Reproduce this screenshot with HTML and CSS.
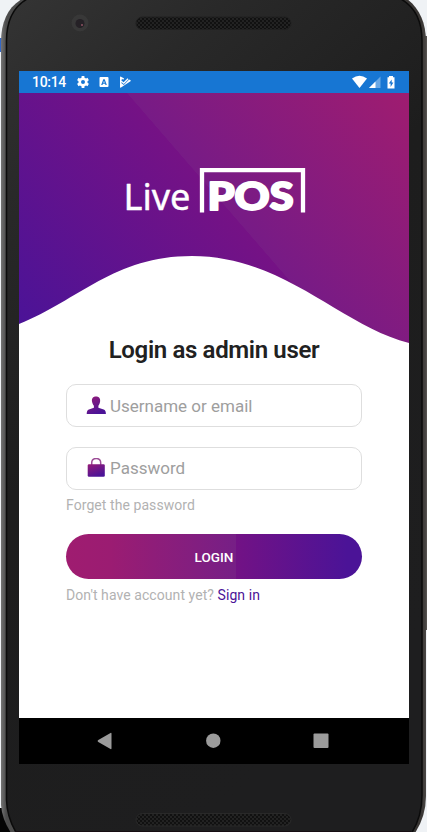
FILE: index.html
```html
<!DOCTYPE html>
<html lang="en">
<head>
<meta charset="utf-8">
<title>Live POS</title>
<link rel="stylesheet" href="styles.css">
</head>
<body>
<main class="device">
  <svg class="device-frame" viewBox="0 0 427 832" aria-hidden="true">
    <defs>
      <linearGradient id="face" x1="0" y1="0" x2="0.45" y2="1">
        <stop offset="0" stop-color="#343434"/><stop offset=".2" stop-color="#292929"/><stop offset=".5" stop-color="#1d1d1d"/><stop offset="1" stop-color="#1e1e1f"/>
      </linearGradient>
      <linearGradient id="rim" x1="0" y1="0" x2="1" y2="0">
        <stop offset="0" stop-color="#747474"/><stop offset=".012" stop-color="#4c4c4c"/><stop offset=".5" stop-color="#333"/><stop offset=".99" stop-color="#393634"/><stop offset="1" stop-color="#4a4745"/>
      </linearGradient>
      <pattern id="mesh" width="4" height="4" patternUnits="userSpaceOnUse">
        <rect width="4" height="4" fill="#222"/><circle cx="1" cy="1" r=".9" fill="#080808"/><circle cx="3" cy="3" r=".9" fill="#080808"/>
      </pattern>
    </defs>
    <path fill="#3568c6" d="M0 38h3v14H0z"/>
    <path fill="#050505" d="M0 808h14v24H0z"/>
    <path fill="#55524f" d="M425 36h2v594h-2z"/>
    <path fill="url(#rim)" d="M22 -1C8 7 1 22 1 42V805Q2 819 11 833H415Q426 816 426 796V42C426 22 419 8 407 -1Z"/>
    <path fill="url(#face)" stroke="#0b0b0b" stroke-width="1.500" d="M29 -2C13 6 6.500 20 6.500 41V800Q7 818 17 834H411Q422 817 422 795V41C422 20 415 6 399 -2Z"/>
    <circle cx="80" cy="23" r="8.500" fill="#383838"/><circle cx="80" cy="23.500" r="4.500" fill="#252126"/><circle cx="82" cy="25" r="1" fill="#8c5262"/>
    <rect x="136" y="17" width="155" height="12.500" rx="6.250" fill="url(#mesh)" stroke="#202020"/>
    <rect x="136" y="813.500" width="155" height="12.500" rx="6.250" fill="url(#mesh)" stroke="#292929"/>
    <path fill="#160d12" d="M15 831h396v1H15z"/>
  </svg>

  <div class="screen">
    <header class="status">
      <span class="clock">10:14</span>
      <svg class="status-left" viewBox="0 0 56 14" fill="#fff">
        <circle cx="7" cy="7" r="3.300" fill="none" stroke="#fff" stroke-width="2.600"/>
        <path d="M5.600 1h2.800v3H5.600zM5.600 10h2.800v3H5.600zM1.100 5.200l1.400-2.400 2.600 1.500-1.400 2.400zM8.900 9.700l1.400-2.400 2.600 1.500-1.400 2.400zM1.100 8.800l2.600-1.500 1.400 2.400-2.600 1.500zM8.900 4.300l2.600-1.500 1.400 2.400-2.600 1.500z"/>
        <path fill-rule="evenodd" d="M24.500 2h7q1 0 1 1v8q0 1-1 1h-7q-1 0-1-1V3q0-1 1-1ZM27.300 4.300 25.200 10h1.300l.4-1.200h2.200l.4 1.200h1.300L28.700 4.300ZM27.300 7.700 28 5.700l.7 2Z"/>
        <path d="M44 2.200q0-1 1-.5l3.200 1.800-1 1.300-1-.8-1 1.200 2.400 2 4-4 .9 1-4.700 4.900-2.500-2 .2 1.100 2.300 1.800 5.300-5.500 1.400.8q.8.500 0 1L45 12.600q-1 .5-1-.5Z"/>
      </svg>
      <svg class="status-right" viewBox="0 0 44 14" fill="#fff">
        <path d="M0 3.500q7.500-5.500 15 0L7.500 13Z"/>
        <path fill="#69a7e5" d="M17 13 28.500 1.500V13Z"/><path d="M17 13l6.500-6.500V13Z"/>
        <path fill-rule="evenodd" d="M37 1h4v1.300h1.500V13.500h-7V2.300H37ZM39.700 4.500 36.800 8.600h1.800v3.300l2.800-4.300h-1.700Z"/>
      </svg>
    </header>

    <svg class="hero" viewBox="0 0 390 250" role="img" aria-label="Live POS">
      <defs>
        <linearGradient id="wave" gradientUnits="userSpaceOnUse" x1="0" y1="231" x2="337" y2="-61">
          <stop offset="0" stop-color="#4b1397"/><stop offset=".522" stop-color="#751285"/><stop offset=".523" stop-color="#771b86"/><stop offset=".95" stop-color="#9b1c72"/><stop offset="1" stop-color="#9f1c70"/>
        </linearGradient>
      </defs>
      <path fill="url(#wave)" d="M0 0H390V250C322 233 265 163 173 163C95 163 60 207 0 231Z"/>
      <text class="logo-light" x="104.500" y="116.500" textLength="67" lengthAdjust="spacingAndGlyphs">Live</text>
      <path d="M183 119.500V77.200H284V119.500" fill="none" stroke="#fff" stroke-width="4.300"/>
      <text class="logo-bold" x="188.500" y="117" textLength="86" lengthAdjust="spacingAndGlyphs">POS</text>
    </svg>

    <form class="login">
      <h1 class="title">Login as admin user</h1>
      <label class="field">
        <svg class="field-icon" viewBox="0 0 20 20">
          <defs><linearGradient id="ink" x1="0" y1="0" x2=".5" y2="1"><stop offset="0" stop-color="#951b77"/><stop offset="1" stop-color="#4b1397"/></linearGradient></defs>
          <path fill="url(#ink)" d="M10 .500c3.300 0 4.500 2.200 4.100 5-.2 2-1 3.300-1.700 4.200v2l5.300 1.800q2.200.8 2.200 4.500H.700q0-3.700 2.200-4.500l5-1.800v-2C7.200 8.800 6.300 7.500 6 5.500 5.600 2.700 6.700.500 10 .500Z"/>
        </svg>
        <span>Username or email</span>
      </label>
      <label class="field field-password">
        <svg class="field-icon" viewBox="0 0 20 20">
          <path d="M5.700 7.500V5q0-4.500 4.500-4.500t4.500 4.500v2.500" fill="none" stroke="#9c4c96" stroke-width="1.500"/>
          <path fill="url(#ink)" d="M3 6.300H17.500q1.300 0 1.300 1.300V17.500q0 1.300-1.300 1.300H3Q1.700 18.800 1.700 17.500V7.600Q1.700 6.300 3 6.300Z"/>
        </svg>
        <span>Password</span>
      </label>
      <p class="forgot">Forget the password</p>
      <button class="submit" type="button">LOGIN</button>
      <p class="signup">Don't have account yet? <a class="signup-link">Sign in</a></p>
    </form>

    <nav class="nav">
      <svg viewBox="0 0 18 18"><path d="M2.300 8.100 14.500 1q1-.5 1 .7v14.600q0 1.200-1 .7L2.300 9.900q-1.600-.9 0-1.800Z"/></svg>
      <svg viewBox="0 0 18 18"><circle cx="9.300" cy="8.700" r="7.200"/></svg>
      <svg viewBox="0 0 18 18"><rect x="1.500" y="1.500" width="15" height="14.500" rx="1"/></svg>
    </nav>
  </div>
</main>
</body>
</html>
```

FILE: styles.css
```css
* { box-sizing: border-box; }
body { margin: 0; background: #eff2f5; font-family: Roboto, "Liberation Sans", sans-serif; }
.device { position: relative; width: 427px; height: 832px; padding: 71px 18px 68px 19px; overflow: hidden; }
.device-frame { position: absolute; inset: 0; width: 427px; height: 832px; }
.screen { position: relative; width: 390px; height: 693px; background: #fff; display: flex; flex-direction: column; }
.status { height: 22px; background: #1776d3; display: flex; align-items: center; padding: 0 13px; color: #fff; flex: none; }
.clock { font-size: 14px; font-weight: 500; line-height: 23px; width: 44px; white-space: nowrap; letter-spacing: -.3px; }
.status-left { width: 56px; height: 14px; }
.status-right { width: 44px; height: 14px; margin-left: auto; }
.hero { display: block; width: 390px; height: 250px; flex: none; }
.hero text { fill: #fff; stroke: #fff; stroke-linejoin: round; }
.hero .logo-light { font-family: "Noto Sans", sans-serif; font-size: 36px; stroke-width: .4px; }
.hero .logo-bold { font-family: Lato, sans-serif; font-size: 38px; font-weight: 900; stroke-width: 2px; }
.login { display: flex; flex-direction: column; flex: 1; padding: 0 47px; margin-top: -9px; }
.title { margin: 0 0 18px; font-size: 24px; line-height: 32px; font-weight: 600; letter-spacing: -.35px; text-align: center; color: #212121; white-space: nowrap; }
.field { display: flex; align-items: center; gap: 4px; height: 43px; margin-bottom: 20px; padding-left: 19px; border: 1px solid #dedede; border-radius: 10px; color: #9e9e9e; font-size: 17px; flex: none; }
.field-password { padding-bottom: 2px; }
.field-icon { width: 20px; height: 20px; }
.forgot, .signup { margin: 0; font-size: 14px; line-height: 18px; letter-spacing: .07px; color: #b2b2b2; white-space: nowrap; }
.forgot { margin-top: -14px; }
.submit { height: 45px; margin: 20px 0 7px; padding: 2px 0 0; border: 0; border-radius: 23px; color: #fff; font: 500 13.500px/43px Roboto, sans-serif; background: linear-gradient(90deg, #9f1c70 0, #9b1c72 15%, #761f86 57.500%, #721285 57.600%, #4b1397 95%); flex: none; }
.signup-link { color: #4b1397; }
.nav { height: 46px; background: #000; display: flex; justify-content: space-between; align-items: center; padding: 0 79px 0 77px; flex: none; }
.nav svg { width: 18px; height: 18px; fill: #9b9b9b; }
```
